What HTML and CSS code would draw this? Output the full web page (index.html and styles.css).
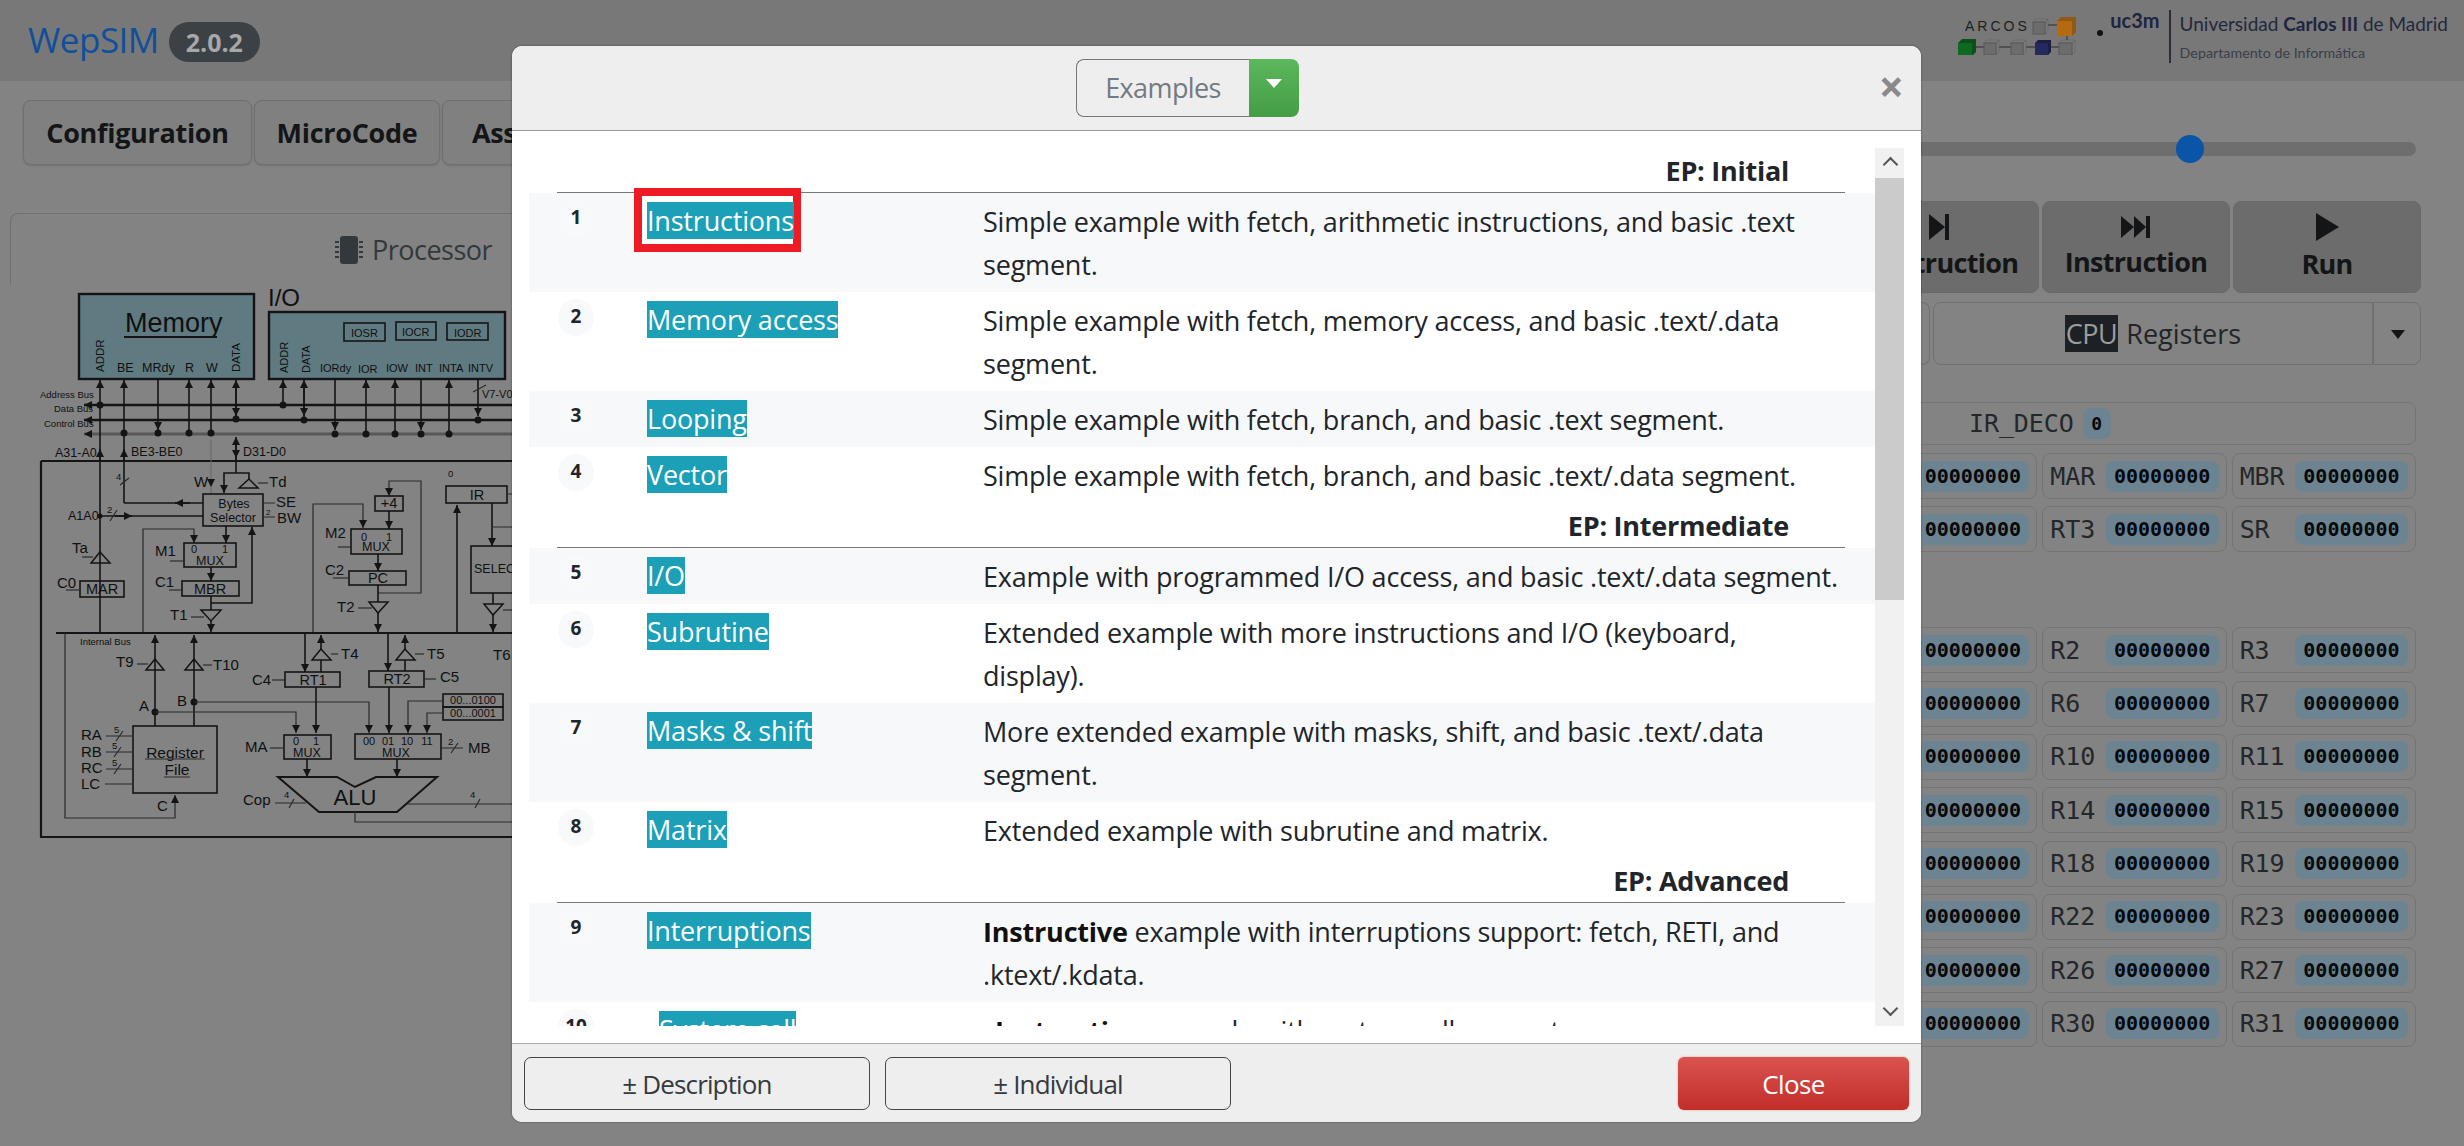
FILE: index.html
```html
<!DOCTYPE html>
<html lang="en">
<head>
<meta charset="utf-8">
<title>WepSIM</title>
<link rel="stylesheet" href="styles.css">
</head>
<body>
<header class="nav">
  <div class="brand"><span class="brand-name">WepSIM</span><span class="version">2.0.2</span></div>
  <div class="logos">
    <div class="arcos">
      <svg class="arcos-svg" width="125" height="44" viewBox="0 0 125 44">
        <text class="arcos-text" x="7" y="20">ARCOS</text>
        <path class="cube-link" d="M88 14h12M18 36h90M109 24v6"/>
        <path class="cube-side" d="M75 11l3-3h12l-3 3zM87 11l3-3v12l-3 3z"/>
        <rect class="cube-gray" x="75" y="11" width="12" height="12"/>
        <path class="cube-orange-s" d="M99 10l4-4h15l-4 4zM114 10l4-4v15l-4 4z"/>
        <rect class="cube-orange" x="99" y="10" width="15" height="15"/>
        <path class="cube-green-s" d="M0 32l4-4h14l-4 4zM14 32l4-4v13l-4 4z"/>
        <rect class="cube-green" x="0" y="32" width="14" height="13"/>
        <path class="cube-side" d="M26 32l3-3h12l-3 3zM38 32l3-3v12l-3 3zM53 32l3-3h12l-3 3zM65 32l3-3v12l-3 3zM101 32l3-3h13l-3 3zM114 32l3-3v12l-3 3z"/>
        <rect class="cube-gray" x="26" y="32" width="12" height="12"/>
        <rect class="cube-gray" x="53" y="32" width="12" height="12"/>
        <path class="cube-navy-s" d="M77 32l3-3h13l-3 3zM90 32l3-3v12l-3 3z"/>
        <rect class="cube-navy" x="77" y="32" width="13" height="12"/>
        <rect class="cube-gray" x="101" y="32" width="13" height="12"/>
      </svg>
    </div>
    <span class="uc-dot"></span>
    <span class="uc3m">uc3m</span>
    <div class="uni">
      <div class="uni-name">Universidad <b>Carlos III</b> de Madrid</div>
      <div class="uni-dept">Departamento de Informática</div>
    </div>
  </div>
</header>

<main class="main">
  <section class="left">
    <div class="toolbar">
      <button class="tool tool-config">Configuration</button>
      <button class="tool tool-micro">MicroCode</button>
      <button class="tool tool-asm">Assembly</button>
    </div>
    <div class="tab">
      <svg class="chip" width="28" height="28" viewBox="0 0 28 28">
        <rect class="chip-body" x="5" y="0" width="18" height="28" rx="3"/>
        <path class="chip-pin" d="M0 6h4M0 11h4M0 16h4M0 21h4M24 6h4M24 11h4M24 16h4M24 21h4"/>
      </svg>
      <span>Processor</span>
    </div>
    <svg class="diagram" width="512" height="570" viewBox="0 285 512 570">
      <defs>
        <marker id="a" markerUnits="userSpaceOnUse" markerWidth="10" markerHeight="10" refX="9" refY="5" orient="auto"><path class="head" d="M1 1L9 5L1 9z"/></marker>
      </defs>
      <rect class="mem" x="79" y="294" width="175" height="85"/>
      <text class="t27" x="125" y="332">Memory</text><path class="s2" d="M124 337H217"/>
      <text class="t11v" transform="translate(104 372) rotate(-90)">ADDR</text>
      <text class="t12" x="117" y="372">BE</text><text class="t12" x="142" y="372">MRdy</text>
      <text class="t12" x="185" y="372">R</text><text class="t12" x="206" y="372">W</text>
      <text class="t11v" transform="translate(240 372) rotate(-90)">DATA</text>
      <text class="t24" x="268" y="306">I/O</text>
      <rect class="mem" x="269" y="312" width="236" height="67"/>
      <rect class="box" x="344" y="323" width="41" height="18"/><rect class="box" x="396" y="322" width="40" height="18"/><rect class="box" x="447" y="323" width="41" height="17"/>
      <text class="t11" x="351" y="337">IOSR</text><text class="t11" x="402" y="336">IOCR</text><text class="t11" x="454" y="337">IODR</text>
      <text class="t11" transform="translate(288 373) rotate(-90)">ADDR</text><text class="t11" transform="translate(310 373) rotate(-90)">DATA</text>
      <text class="t11" x="320" y="372">IORdy</text><text class="t11" x="358" y="373">IOR</text><text class="t11" x="386" y="372">IOW</text><text class="t11" x="415" y="372">INT</text><text class="t11" x="439" y="372">INTA</text><text class="t11" x="468" y="372">INTV</text>

      <path class="bus" marker-end="url(#a)" d="M512 405H84"/><path class="bus" marker-end="url(#a)" d="M512 420H84"/><path class="bus-c" marker-end="url(#a)" d="M512 434H84"/>
      <text class="t9" x="40" y="398">Address Bus</text><text class="t9" x="54" y="412">Data Bus</text><text class="t9" x="44" y="427">Control Bus</text>

      <path class="s" marker-end="url(#a)" d="M100 632V380"/><path class="s" marker-end="url(#a)" d="M124 503V380"/><path class="s" marker-end="url(#a)" d="M158 380V430"/>
      <path class="s" marker-end="url(#a)" d="M189 434V380"/><path class="s" marker-end="url(#a)" d="M211 434V380"/><path class="s" marker-end="url(#a)" d="M236 420V380"/><path class="s" marker-end="url(#a)" d="M236 385V416"/>
      <path class="s" marker-end="url(#a)" d="M283 405V380"/><path class="s" marker-end="url(#a)" d="M304 420V380"/><path class="s" marker-end="url(#a)" d="M304 385V416"/>
      <path class="s" marker-end="url(#a)" d="M335 380V430"/><path class="s" marker-end="url(#a)" d="M366 434V380"/><path class="s" marker-end="url(#a)" d="M395 434V380"/><path class="s" marker-end="url(#a)" d="M421 380V430"/><path class="s" marker-end="url(#a)" d="M449 434V380"/><path class="s" marker-end="url(#a)" d="M478 380V416"/>
      <path class="s1" d="M473 392L486 385"/><text class="t11" x="482" y="398">V7-V0</text>
      <circle class="dot" cx="100" cy="405" r="3.5"/><circle class="dot" cx="124" cy="433" r="3.5"/><circle class="dot" cx="158" cy="433" r="3.5"/><circle class="dot" cx="189" cy="433" r="3.5"/><circle class="dot" cx="211" cy="433" r="3.5"/><circle class="dot" cx="236" cy="419" r="3.5"/><circle class="dot" cx="283" cy="405" r="3.5"/><circle class="dot" cx="304" cy="420" r="3.5"/><circle class="dot" cx="335" cy="434" r="3.5"/><circle class="dot" cx="366" cy="434" r="3.5"/><circle class="dot" cx="395" cy="434" r="3.5"/><circle class="dot" cx="421" cy="434" r="3.5"/><circle class="dot" cx="449" cy="434" r="3.5"/><circle class="dot" cx="478" cy="420" r="3.5"/>

      <text class="t12" x="55" y="457">A31-A0</text><text class="t12" x="131" y="456">BE3-BE0</text><text class="t12" x="243" y="456">D31-D0</text>
      <path class="s" marker-end="url(#a)" d="M100 462V449"/><path class="s" marker-end="url(#a)" d="M124 462V449"/><path class="s" marker-end="url(#a)" d="M236 462V437"/><path class="s" marker-end="url(#a)" d="M236 440V458"/>
      <path class="s2" d="M41 461H512M41 461V837H512"/>

      <path class="s" d="M236 458V473"/><path class="s" marker-end="url(#a)" d="M249 479V473H224V493"/><path class="tri" d="M249 479L258 488H239z"/><path class="s1" d="M258 483H268"/><text class="t15" x="269" y="487">Td</text>
      <text class="t15" x="194" y="487">W</text><path class="thin" marker-end="url(#a)" d="M211 440V487"/><path class="thin" d="M211 487V494"/>
      <text class="t9" x="116" y="480">4</text><path class="s1" d="M120 485L129 478"/>
      <path class="s" d="M124 503H203"/><path class="s" marker-end="url(#a)" d="M190 503H175"/>
      <text class="t12" x="68" y="520">A1A0</text><circle class="dot" cx="100" cy="516" r="2.5"/><path class="s" d="M100 516H203"/><path class="s" marker-end="url(#a)" d="M115 516H132"/><text class="t9" x="107" y="513">2</text><path class="s1" d="M110 521L117 510"/>
      <rect class="box" x="203" y="494" width="60" height="32"/><text class="t12c" x="234" y="508">Bytes</text><text class="t12c" x="233" y="522">Selector</text>
      <path class="s1" d="M263 503H275M263 517H275"/><text class="t15" x="276" y="507">SE</text><text class="t15" x="277" y="523">BW</text><text class="t8" x="266" y="515">2</text>

      <path class="s1" marker-end="url(#a)" d="M143 632V529H194V543"/><path class="s" marker-end="url(#a)" d="M226 526V543"/><path class="s" marker-end="url(#a)" d="M211 603H252V527"/>
      <rect class="box" x="184" y="543" width="52" height="24"/><text class="t11" x="191" y="553">0</text><text class="t11" x="222" y="553">1</text><text class="t12c" x="210" y="565">MUX</text>
      <text class="t15" x="155" y="556">M1</text><path class="s1" d="M170 561H184"/>
      <rect class="box" x="182" y="581" width="57" height="15"/><text class="t14c" x="210" y="594">MBR</text><text class="t15" x="155" y="587">C1</text><path class="s1" d="M169 590H182"/>
      <path class="s" marker-end="url(#a)" d="M211 567V581"/>
      <rect class="box" x="80" y="581" width="44" height="16"/><text class="t14c" x="102" y="594">MAR</text><text class="t15" x="57" y="588">C0</text><path class="s1" d="M66 590H80"/>
      <path class="tri" d="M100 552L110 563H91z"/><path class="s1" d="M82 557H93"/><text class="t15" x="72" y="553">Ta</text>
      <path class="s" d="M211 596V610"/><path class="tri" d="M201 610H221L211 621z"/><path class="s" marker-end="url(#a)" d="M211 621V632"/><text class="t15" x="170" y="620">T1</text><path class="s1" d="M191 617H204"/>
      <path class="s2" d="M56 633H512"/><text class="t9" x="80" y="645">Internal Bus</text>

      <path class="s1" marker-end="url(#a)" d="M313 632V504H363V528"/><rect class="box" x="375" y="496" width="28" height="15"/><text class="t14c" x="389" y="508">+4</text>
      <path class="s1" marker-end="url(#a)" d="M378 593H421V481H389V496"/><path class="s" marker-end="url(#a)" d="M389 511V529"/>
      <rect class="box" x="351" y="529" width="51" height="25"/><text class="t11" x="361" y="541">0</text><text class="t11" x="386" y="541">1</text><text class="t12c" x="376" y="551">MUX</text>
      <text class="t15" x="325" y="538">M2</text><path class="s1" d="M338 547H351"/>
      <rect class="box" x="349" y="571" width="57" height="14"/><text class="t14c" x="378" y="583">PC</text><text class="t15" x="325" y="575">C2</text><path class="s1" d="M333 578H349"/><path class="s" marker-end="url(#a)" d="M378 554V571"/>
      <path class="s" d="M378 585V602"/><path class="tri" d="M369 602H388L378 613z"/><path class="s" marker-end="url(#a)" d="M378 613V632"/><text class="t15" x="337" y="612">T2</text><path class="s1" d="M358 608H372"/>
      <rect class="box" x="446" y="486" width="61" height="17"/><text class="t14c" x="477" y="500">IR</text><text class="t9" x="448" y="477">0</text>
      <path class="s" marker-end="url(#a)" d="M457 632V505"/><path class="s" marker-end="url(#a)" d="M492 503V546"/><path class="s1" d="M492 527H512M507 494H512"/>
      <rect class="box" x="471" y="546" width="60" height="47"/><text class="t12" x="474" y="573">SELEC</text>
      <path class="s" d="M493 593V604"/><path class="tri" d="M484 604H503L493 615z"/><path class="s" marker-end="url(#a)" d="M493 615V632"/><path class="s1" d="M503 610H512"/><text class="t15" x="493" y="660">T6</text>

      <path class="s1" marker-end="url(#a)" d="M65 633V818H175V795"/><text class="t15" x="157" y="811">C</text>
      <path class="s" marker-end="url(#a)" d="M155 726V635"/><path class="tri" d="M155 659L164 670H146z"/><text class="t15" x="116" y="667">T9</text><path class="s1" d="M137 664H148"/>
      <path class="s" marker-end="url(#a)" d="M194 726V635"/><path class="tri" d="M194 659L203 670H185z"/><text class="t15" x="213" y="670">T10</text><path class="s1" d="M203 665H212"/>
      <circle class="dot" cx="155" cy="712" r="3.5"/><text class="t15" x="139" y="711">A</text><path class="s1" marker-end="url(#a)" d="M155 712H296V733"/>
      <circle class="dot" cx="194" cy="702" r="3.5"/><text class="t15" x="177" y="706">B</text><path class="s1" marker-end="url(#a)" d="M194 702H369V733"/>
      <rect class="box" x="133" y="726" width="84" height="67"/><text class="t16c" x="175" y="758">Register</text><text class="t16c" x="177" y="775">File</text><path class="s1" d="M145 759H205M164 777H190"/>
      <text class="t15" x="81" y="740">RA</text><text class="t15" x="81" y="757">RB</text><text class="t15" x="81" y="773">RC</text><text class="t15" x="81" y="789">LC</text>
      <path class="s1" d="M106 736H133M106 752H133M106 769H133M105 784H133M116 741L123 731M114 757L121 747M114 774L121 764"/>
      <text class="t9" x="114" y="733">5</text><text class="t9" x="112" y="749">5</text><text class="t9" x="112" y="766">5</text>
      <text class="t15" x="252" y="685">C4</text><path class="s1" d="M272 680H285"/><rect class="box" x="285" y="672" width="55" height="15"/><text class="t14c" x="313" y="685">RT1</text>
      <path class="s" marker-end="url(#a)" d="M305 634V672"/><path class="s" d="M321 660V672"/><path class="tri" d="M321 649L331 660H312z"/><path class="s" marker-end="url(#a)" d="M321 649V635"/><text class="t15" x="341" y="659">T4</text><path class="s1" d="M331 654H338"/>
      <path class="s" marker-end="url(#a)" d="M316 687V733"/>
      <rect class="box" x="369" y="671" width="55" height="16"/><text class="t14c" x="397" y="684">RT2</text><text class="t15" x="440" y="682">C5</text><path class="s1" d="M424 679H436"/>
      <path class="s" marker-end="url(#a)" d="M388 634V671"/><path class="s" d="M405 660V671"/><path class="tri" d="M405 649L415 660H396z"/><path class="s" marker-end="url(#a)" d="M405 649V635"/><text class="t15" x="427" y="659">T5</text><path class="s1" d="M415 654H424"/>
      <path class="s" marker-end="url(#a)" d="M389 687V733"/>
      <rect class="box" x="284" y="735" width="47" height="24"/><text class="t11" x="293" y="745">0</text><text class="t11" x="313" y="745">1</text><text class="t12c" x="307" y="757">MUX</text><text class="t15" x="245" y="752">MA</text><path class="s1" d="M270 748H284"/>
      <rect class="box" x="355" y="734" width="86" height="25"/><text class="t11c" x="369" y="745">00</text><text class="t11c" x="388" y="745">01</text><text class="t11c" x="407" y="745">10</text><text class="t11c" x="427" y="745">11</text><text class="t12c" x="396" y="757">MUX</text>
      <text class="t9" x="448" y="745">2</text><path class="s1" d="M441 748H463M451 753L458 743"/><text class="t15" x="468" y="753">MB</text>
      <rect class="box" x="443" y="694" width="60" height="13"/><rect class="box" x="443" y="707" width="60" height="13"/><text class="t11c" x="473" y="704">00...0100</text><text class="t11c" x="473" y="717">00...0001</text>
      <path class="s1" marker-end="url(#a)" d="M443 701H408V733"/><path class="s1" marker-end="url(#a)" d="M443 713H427V733"/>
      <path class="alu" d="M278 777H337L355 787L376 777H437L397 812H319z"/><text class="t21c" x="355" y="805">ALU</text>
      <path class="s" marker-end="url(#a)" d="M307 759V777"/><path class="s" marker-end="url(#a)" d="M397 759V777"/>
      <text class="t15" x="243" y="805">Cop</text><path class="s1" d="M275 803H306M289 808L294 799"/><text class="t9" x="284" y="798">4</text>
      <path class="s1" d="M407 804H512M475 808L480 799"/><text class="t9" x="470" y="798">4</text><path class="s1" d="M355 812V822H512"/>
    </svg>
  </section>

  <aside class="right">
    <div class="slider"><span class="slider-thumb"></span></div>
    <div class="controls">
      <button class="ctl ctl-first">
        <svg class="ctl-icon" width="24" height="26" viewBox="0 0 24 26"><path d="M2 0L18 13L2 26zM18 0h4v26h-4z"/></svg>
        <span>µInstruction</span>
      </button>
      <button class="ctl">
        <svg class="ctl-icon" width="30" height="24" viewBox="0 0 30 24"><path d="M0 1L13 12L0 23zM13 1L25 12L13 23zM25 1h4v22h-4z"/></svg>
        <span>Instruction</span>
      </button>
      <button class="ctl">
        <svg class="ctl-icon" width="26" height="28" viewBox="0 0 26 28"><path d="M2 0L25 14L2 28z"/></svg>
        <span>Run</span>
      </button>
    </div>
    <div class="selector">
      <div class="sel-side"></div>
      <div class="sel-main"><span class="cpu-tag">CPU</span><span>Registers</span></div>
      <div class="sel-caret"></div>
    </div>
    <div class="regs">
      <div class="ir-deco"><span class="reg-name">IR_DECO</span><span class="val val-small">0</span></div>
      <div class="reg-grid">
        <div class="reg"><span class="reg-name">PC</span><span class="val">00000000</span></div>
        <div class="reg"><span class="reg-name">MAR</span><span class="val">00000000</span></div>
        <div class="reg"><span class="reg-name">MBR</span><span class="val">00000000</span></div>
        <div class="reg"><span class="reg-name">RT2</span><span class="val">00000000</span></div>
        <div class="reg"><span class="reg-name">RT3</span><span class="val">00000000</span></div>
        <div class="reg"><span class="reg-name">SR</span><span class="val">00000000</span></div>
      </div>
      <div class="reg-grid reg-grid-gpr">
        <div class="reg"><span class="reg-name">R1</span><span class="val">00000000</span></div>
        <div class="reg"><span class="reg-name">R2</span><span class="val">00000000</span></div>
        <div class="reg"><span class="reg-name">R3</span><span class="val">00000000</span></div>
        <div class="reg"><span class="reg-name">R5</span><span class="val">00000000</span></div>
        <div class="reg"><span class="reg-name">R6</span><span class="val">00000000</span></div>
        <div class="reg"><span class="reg-name">R7</span><span class="val">00000000</span></div>
        <div class="reg"><span class="reg-name">R9</span><span class="val">00000000</span></div>
        <div class="reg"><span class="reg-name">R10</span><span class="val">00000000</span></div>
        <div class="reg"><span class="reg-name">R11</span><span class="val">00000000</span></div>
        <div class="reg"><span class="reg-name">R13</span><span class="val">00000000</span></div>
        <div class="reg"><span class="reg-name">R14</span><span class="val">00000000</span></div>
        <div class="reg"><span class="reg-name">R15</span><span class="val">00000000</span></div>
        <div class="reg"><span class="reg-name">R17</span><span class="val">00000000</span></div>
        <div class="reg"><span class="reg-name">R18</span><span class="val">00000000</span></div>
        <div class="reg"><span class="reg-name">R19</span><span class="val">00000000</span></div>
        <div class="reg"><span class="reg-name">R21</span><span class="val">00000000</span></div>
        <div class="reg"><span class="reg-name">R22</span><span class="val">00000000</span></div>
        <div class="reg"><span class="reg-name">R23</span><span class="val">00000000</span></div>
        <div class="reg"><span class="reg-name">R25</span><span class="val">00000000</span></div>
        <div class="reg"><span class="reg-name">R26</span><span class="val">00000000</span></div>
        <div class="reg"><span class="reg-name">R27</span><span class="val">00000000</span></div>
        <div class="reg"><span class="reg-name">R29</span><span class="val">00000000</span></div>
        <div class="reg"><span class="reg-name">R30</span><span class="val">00000000</span></div>
        <div class="reg"><span class="reg-name">R31</span><span class="val">00000000</span></div>
      </div>
    </div>
  </aside>
</main>

<div class="modal">
  <div class="modal-head">
    <div class="split">
      <span class="split-label">Examples</span>
      <span class="split-caret"></span>
    </div>
    <span class="modal-x">×</span>
  </div>
  <div class="modal-body">
    <div class="list">
      <div class="ep">EP: Initial</div>
      <div class="row odd"><span class="num">1</span><div class="name-cell"><span class="name">Instructions</span><span class="mark"></span></div><p class="desc">Simple example with fetch, arithmetic instructions, and basic .text segment.</p></div>
      <div class="row"><span class="num">2</span><div class="name-cell"><span class="name">Memory access</span></div><p class="desc">Simple example with fetch, memory access, and basic .text/.data segment.</p></div>
      <div class="row odd"><span class="num">3</span><div class="name-cell"><span class="name">Looping</span></div><p class="desc">Simple example with fetch, branch, and basic .text segment.</p></div>
      <div class="row"><span class="num">4</span><div class="name-cell"><span class="name">Vector</span></div><p class="desc">Simple example with fetch, branch, and basic .text/.data segment.</p></div>
      <div class="ep">EP: Intermediate</div>
      <div class="row odd"><span class="num">5</span><div class="name-cell"><span class="name">I/O</span></div><p class="desc">Example with programmed I/O access, and basic .text/.data segment.</p></div>
      <div class="row"><span class="num">6</span><div class="name-cell"><span class="name">Subrutine</span></div><p class="desc">Extended example with more instructions and I/O (keyboard, display).</p></div>
      <div class="row odd"><span class="num">7</span><div class="name-cell"><span class="name">Masks &amp; shift</span></div><p class="desc">More extended example with masks, shift, and basic .text/.data segment.</p></div>
      <div class="row"><span class="num">8</span><div class="name-cell"><span class="name">Matrix</span></div><p class="desc">Extended example with subrutine and matrix.</p></div>
      <div class="ep">EP: Advanced</div>
      <div class="row odd"><span class="num">9</span><div class="name-cell"><span class="name">Interruptions</span></div><p class="desc"><b>Instructive</b> example with interruptions support: fetch, RETI, and .ktext/.kdata.</p></div>
      <div class="row row-wide"><span class="num">10</span><div class="name-cell"><span class="name">System call</span></div><p class="desc"><b>Instructive</b> example with system call support.</p></div>
    </div>
    <div class="scrollbar">
      <span class="sb-btn sb-up"></span>
      <span class="sb-thumb"></span>
      <span class="sb-track"></span>
      <span class="sb-btn sb-down"></span>
    </div>
  </div>
  <div class="modal-foot">
    <button class="foot-btn">± Description</button>
    <button class="foot-btn">± Individual</button>
    <button class="close-btn">Close</button>
  </div>
</div>
</body>
</html>
```

FILE: styles.css
```css
* { box-sizing: border-box; }
html, body { margin: 0; height: 100%; }
body {
  background: #838383;
  font-family: "Open Sans", "Noto Sans", sans-serif;
  color: #131517;
  overflow: hidden;
  position: relative;
}
button { font-family: inherit; cursor: pointer; }

/* navbar */
.nav {
  height: 81px;
  background: #787878;
  display: flex;
  justify-content: space-between;
  align-items: flex-start;
}
.brand { display: flex; align-items: center; height: 81px; padding-left: 28px; }
.brand-name { font-size: 35px; color: #0f4f9c; letter-spacing: -0.5px; position: relative; top: -1px; }
.version {
  margin-left: 10px;
  width: 91px; height: 40px; border-radius: 20px;
  background: #3b4145; color: #a8a8a8;
  font-weight: 700; font-size: 25px; line-height: 40px; text-align: center;
  position: relative; top: 1px;
}
.logos { display: flex; align-items: flex-start; padding-right: 16px; }
.arcos-svg { display: block; margin: 11px 0 0 0; }
.arcos-text { font: 14px "Liberation Sans", sans-serif; letter-spacing: 3px; fill: #1c1f22; }
.cube-link { stroke: #444; stroke-width: 1.5; fill: none; }
.cube-gray { fill: #6c6c6c; stroke: #585858; }
.cube-side { fill: #7a7a7a; stroke: #5c5c5c; stroke-width: .5; }
.cube-orange { fill: #b56a10; }
.cube-orange-s { fill: #8f5a18; }
.cube-green { fill: #0e6a22; }
.cube-green-s { fill: #0c4f1a; }
.cube-navy { fill: #232a60; }
.cube-navy-s { fill: #1b1f44; }
.uc-dot { width: 6px; height: 6px; border-radius: 50%; background: #111; margin: 30px 0 0 14px; }
.uc3m { font: 700 20px "Lato", sans-serif; color: #1d2540; margin: 8px 0 0 7px; }
.uni { margin: 10px 0 0 9px; padding-left: 9px; border-left: 2px solid #2a2d3a; height: 53px; }
.uni-name { font: 19px/24px "Lato", sans-serif; color: #24283c; white-space: nowrap; margin-top: 2px; }
.uni-name b { font-weight: 700; color: #1d2540; }
.uni-dept { font: 14.3px/20px "Lato", sans-serif; color: #3a3e4a; white-space: nowrap; margin-top: 7px; }

/* main */
.main { display: flex; }
.left { flex: 1 1 auto; min-width: 0; }
.toolbar { display: flex; gap: 2px; margin: 19px 0 0 23px; }
.tool {
  height: 65px;
  background: #808080;
  border: 1px solid #6f6f6f;
  border-radius: 8px;
  font-size: 27px; font-weight: 700; color: #131517;
  letter-spacing: -0.3px;
  padding: 0;
  box-shadow: 0 1px 2px rgba(0,0,0,.12);
}
.tool-config { width: 229px; }
.tool-micro { width: 186px; }
.tool-asm { width: 186px; }
.tab {
  width: 807px; height: 72px;
  margin: 48px 0 0 10px;
  border: 1px solid #707070; border-bottom: 0;
  border-radius: 8px 8px 0 0;
  display: flex; align-items: center; justify-content: center; gap: 9px;
  font-size: 27px; color: #33383c; letter-spacing: -0.5px;
}
.chip-body { fill: #33383c; }
.chip-pin { stroke: #33383c; stroke-width: 2; }
.diagram { display: block; }

/* diagram */
.diagram text { font-family: "Liberation Sans", sans-serif; fill: #0f1011; }
.s, .s1, .s2, .thin, .bus, .bus-c, .box, .tri, .alu, .mem { fill: none; stroke: #141414; }
.s { stroke-width: 1.6; }
.s1 { stroke-width: 1.2; stroke: #2a2a2a; }
.s2 { stroke-width: 2.2; }
.thin { stroke: #666; stroke-width: 1; }
.bus { stroke-width: 2.6; }
.bus-c { stroke-width: 3; stroke: #585858; }
.box { stroke-width: 1.6; }
.tri { stroke-width: 1.5; }
.alu { stroke-width: 2; }
.mem { fill: #5f7a80; stroke-width: 2.4; }
.dot, .head { fill: #141414; }
.t8 { font-size: 8px; }
.t9 { font-size: 9.5px; }
.t11 { font-size: 11px; }
.t11v { font-size: 11.5px; }
.t12 { font-size: 12.5px; }
.t15 { font-size: 15px; }
.t24 { font-size: 24px; }
.t27 { font-size: 27px; }
.t11c, .t12c, .t14c, .t16c, .t21c { text-anchor: middle; }
.t11c { font-size: 11px; }
.t12c { font-size: 12.5px; }
.t14c { font-size: 14.5px; }
.t16c { font-size: 15.5px; }
.t21c { font-size: 22px; }

/* right column */
.right { flex: 0 0 583px; margin-right: 43px; }
.slider {
  margin: 61px 5px 0 0; height: 14px;
  background: #6e6e6e; border-radius: 7px; position: relative;
}
.slider-thumb {
  position: absolute; left: 338px; top: -7px;
  width: 28px; height: 28px; border-radius: 50%; background: #0a55a8;
}
.controls { display: flex; gap: 3px; margin-top: 45px; }
.ctl {
  flex: 0 0 188px; height: 92px;
  background: #6c6c6c; border: 1px solid #6a6a6a; border-radius: 8px;
  display: flex; flex-direction: column; align-items: center; justify-content: center; gap: 4px;
  font-size: 27px; font-weight: 700; color: #131517; letter-spacing: -0.7px; padding: 0;
}
.ctl-first { flex-basis: 201px; }
.ctl-icon { fill: #131517; display: block; }
.selector { display: flex; height: 63px; margin-top: 9px; gap: 3px; }
.sel-side { flex: 0 0 92px; border: 1px solid #707070; border-left: 0; border-radius: 0 8px 8px 0; }
.sel-main {
  flex: 1 1 auto;
  border: 1px solid #707070; border-radius: 8px 0 0 8px;
  display: flex; align-items: center; justify-content: center; gap: 8px;
  font-size: 27px; color: #222528;
}
.cpu-tag { background: #1d2125; color: #9c9c9c; height: 37px; line-height: 37px; padding: 0 1px; letter-spacing: -0.5px; }
.sel-caret { flex: 0 0 48px; border: 1px solid #707070; border-radius: 0 8px 8px 0; margin-left: -3px; position: relative; }
.sel-caret::after {
  content: ""; position: absolute; left: 17px; top: 27px;
  border: 7px solid transparent; border-top: 9px solid #131517; border-bottom: 0;
}
.regs { padding: 37px 5px 0 15px; }
.ir-deco {
  height: 43px; border: 1px solid #747474; border-radius: 8px;
  display: flex; align-items: center; padding-left: 115px;
}
.reg-name { font: 25px "DejaVu Sans Mono", monospace; color: #24272a; letter-spacing: -0.1px; }
.val {
  background: #6c8492; border-radius: 8px;
  font: 700 20px/31px "DejaVu Sans Mono", monospace; color: #06080a;
  width: 113px; height: 31px; text-align: center; flex: 0 0 auto;
}
.val-small { width: 28px; margin-left: 9px; font-size: 18px; }
.reg-grid {
  display: grid; grid-template-columns: repeat(3, 1fr);
  column-gap: 5px; row-gap: 7.33px; margin-top: 8px;
}
.reg-grid-gpr { margin-top: 75px; }
.reg {
  height: 46px; border: 1px solid #747474; border-radius: 8px;
  display: flex; align-items: center; justify-content: space-between; padding: 0 7px;
}

/* modal */
.modal {
  position: absolute; left: 512px; top: 46px; width: 1409px; height: 1076px;
  background: #fff; border-radius: 10px; overflow: hidden;
  display: flex; flex-direction: column;
  box-shadow: 0 0 2px rgba(0,0,0,.5);
}
.modal-head {
  flex: 0 0 85px; background: #eee; border-bottom: 1px solid #999;
  display: flex; align-items: center; justify-content: center; position: relative;
}
.split { display: flex; height: 58px; margin-left: -58px; }
.split-label {
  width: 173px; border: 1px solid #777; border-right: 0; border-radius: 8px 0 0 8px;
  font-size: 27px; line-height: 55px; text-align: center; color: #737a82; letter-spacing: -0.6px;
}
.split-caret {
  width: 50px; border-radius: 0 8px 8px 0;
  background: linear-gradient(#5cb85c, #449d44);
  position: relative;
}
.split-caret::after {
  content: ""; position: absolute; left: 17px; top: 20px;
  border: 8px solid transparent; border-top: 9px solid #fff; border-bottom: 0;
}
.modal-x {
  position: absolute; right: 17px; top: 17px;
  font-size: 44px; line-height: 46px; font-weight: 700; color: #8a8a8a;
}
.modal-body { flex: 1 1 auto; min-height: 0; display: flex; padding: 17px; }
.list { flex: 1 1 auto; min-width: 0; overflow: hidden; }
.ep {
  height: 45px; margin: 0 30px 0 28px; padding-right: 56px;
  border-bottom: 1px solid #777;
  text-align: right; font-size: 27px; font-weight: 700; line-height: 46px; letter-spacing: -0.25px; color: #212529;
}
.row {
  display: grid; grid-template-columns: 89px 336px 858px;
  padding: 7px 0 6px 29px; min-height: 56px;
}
.row.odd { background: #f7f8fa; }
.row-wide { grid-template-columns: 101px 336px 846px; }
.num {
  justify-self: start;
  min-width: 36px; height: 37px; padding: 0 7px; border-radius: 18px;
  background: #f8f9fa; font-size: 19px; font-weight: 700; line-height: 34px; text-align: center; color: #212529;
}
.name-cell { position: relative; align-self: start; width: max-content; height: 41px; display: flex; }
.name {
  position: relative; z-index: 1;
  background: #1ba0b8; color: #fff; font-size: 27px; line-height: 37px; height: 37px;
  letter-spacing: -0.2px; white-space: nowrap; margin-top: 2px;
}
.mark {
  position: absolute; left: -13px; right: -7px; top: -12px; bottom: -11px;
  border: 8px solid #ed1c24; background: #fff;
}
.desc {
  margin: 0; font-size: 27px; line-height: 43px; letter-spacing: -0.2px; color: #212529;
}
.desc b { color: #111; }
.scrollbar { flex: 0 0 29px; display: flex; flex-direction: column; background: #f1f1f1; }
.sb-btn { flex: 0 0 30px; position: relative; }
.sb-btn::after {
  content: ""; position: absolute; left: 10px; top: 11px; width: 9px; height: 9px;
  border: solid #555; border-width: 2px 0 0 2px; transform: rotate(45deg);
}
.sb-down::after { transform: rotate(225deg); top: 7px; }
.sb-thumb { flex: 0 0 422px; background: #cbcbcb; }
.sb-track { flex: 1 1 auto; }
.modal-foot {
  flex: 0 0 79px; background: #eee; border-top: 1px solid #aaa;
  display: flex; align-items: flex-start; padding: 13px 12px 0 12px; gap: 15px;
}
.foot-btn {
  width: 346px; height: 53px; background: #eee;
  border: 1px solid #444; border-radius: 7px;
  font-size: 26px; color: #343a40; letter-spacing: -0.85px; padding: 0;
}
.close-btn {
  width: 231px; height: 53px; margin-left: auto;
  background: linear-gradient(#d9534f, #c12e2a);
  border: 0; border-radius: 6px; box-shadow: 0 0 2px #e88;
  color: #fff; font-size: 26px; letter-spacing: -0.6px; padding: 0;
}
```
